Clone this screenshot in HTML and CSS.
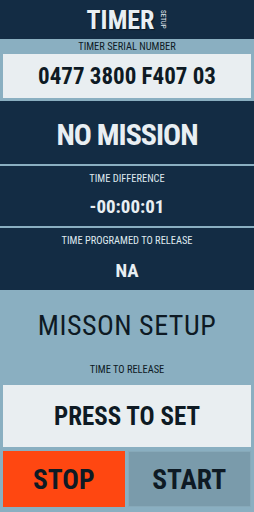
FILE: index.html
```html
<!DOCTYPE html>
<html lang="en">
<head>
  <meta charset="UTF-8">
  <meta name="viewport" content="width=device-width, initial-scale=1.0">
  <title>Timer Setup</title>
  <link rel="stylesheet" href="styles.css">
</head>
<body>

  <header class="top-bar">
    <h1>TIMER</h1>
    <span class="sub">SETUP</span>
  </header>

  <div class="serial">
    <div class="label">TIMER SERIAL NUMBER</div>
    <div class="box serial-box">0477 3800 F407 03</div>
  </div>

  <div class="status">
    <div class="row mission">NO MISSION</div>
    <div class="row">
      <div class="label">TIME DIFFERENCE</div>
      <div class="value">-00:00:01</div>
    </div>
    <div class="row">
      <div class="label">TIME PROGRAMED TO RELEASE</div>
      <div class="value">NA</div>
    </div>
  </div>

  <div class="setup">
    <h2>MISSON SETUP</h2>
    <div class="label">TIME TO RELEASE</div>
    <button class="box set-box">PRESS TO SET</button>
    <div class="actions">
      <button class="btn stop">STOP</button>
      <button class="btn start">START</button>
    </div>
  </div>

</body>
</html>
```

FILE: styles.css
```css
body {
  margin: 0;
  width: 254px;
  height: 512px;
  overflow: hidden;
  background: #8aafc1;
  color: #0e1a24;
  font-family: "Liberation Sans Narrow", "Roboto Condensed", "DejaVu Sans Condensed", Roboto, sans-serif;
}

.top-bar {
  height: 39px;
  background: #132c44;
  display: flex;
  justify-content: center;
  align-items: center;
  gap: 5px;
}

.top-bar h1 {
  margin: 0;
  font-size: 26px;
  font-weight: bold;
  color: #e9eff3;
  text-shadow: 1px 1px 1px rgba(0, 0, 0, 0.5);
}

.top-bar .sub {
  writing-mode: vertical-rl;
  font-size: 7px;
  color: #e9eff3;
}

.label {
  font-size: 10.4px;
  line-height: 12px;
  text-align: center;
}

.serial {
  padding: 0 3px 3px;
}

.serial .label {
  height: 15px;
  line-height: 16px;
}

.box {
  display: flex;
  justify-content: center;
  align-items: center;
  background: #e9eef1;
  font-family: inherit;
  font-weight: bold;
  color: #0e1a24;
}

.serial-box {
  height: 44px;
  font-size: 23px;
}

.status {
  background: #132c44;
  color: #e9eff3;
}

.row {
  height: 62px;
  text-align: center;
  border-bottom: 2px solid #8aafc1;
  box-sizing: border-box;
}

.row:last-child {
  border-bottom: none;
}

.mission {
  height: 65px;
  line-height: 68px;
  font-size: 30px;
  letter-spacing: -1px;
  font-weight: bold;
}

.row .label {
  padding-top: 7px;
  color: #dfe8ee;
}

.row .value {
  margin-top: 10px;
  font-size: 19px;
  font-weight: bold;
}

.row:last-child .value {
  margin-top: 12px;
}

.setup {
  padding: 0 3px;
}

.setup h2 {
  margin: 0;
  padding-top: 20px;
  height: 52px;
  box-sizing: border-box;
  text-align: center;
  font-size: 28px;
  letter-spacing: 0.5px;
  font-weight: normal;
  line-height: 31px;
}

.setup .label {
  height: 43px;
  padding-top: 22px;
  box-sizing: border-box;
}

.set-box {
  width: 100%;
  height: 62px;
  border: none;
  padding: 0;
  font-size: 25px;
}

.actions {
  display: flex;
  gap: 3px;
  margin-top: 4px;
}

.btn {
  flex: 1;
  height: 56px;
  border: none;
  padding: 0;
  font-family: inherit;
  font-size: 27.5px;
  font-weight: bold;
  color: #0e1a24;
}

.stop {
  background: #ff4711;
}

.start {
  background: #7a9bab;
  border: 1px solid #87a9b9;
}
```
